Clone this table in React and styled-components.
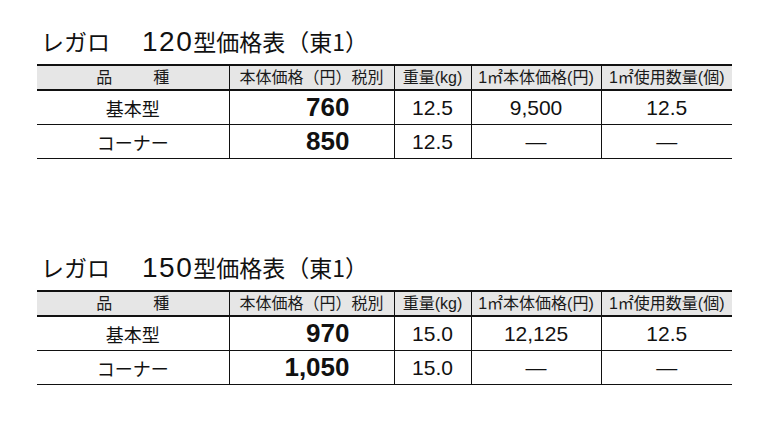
import React from "react"
import styled, { createGlobalStyle } from "styled-components"

const GlobalStyle = createGlobalStyle`
  body {
    margin: 0;
    background: #fff;
    font-family: "Liberation Sans", "Noto Sans CJK JP", sans-serif;
    color: #111;
  }
`

const tables = [
  {
    model: "120",
    rows: [
      { name: "基本型", price: "760", weight: "12.5", perArea: "9,500", count: "12.5" },
      { name: "コーナー", price: "850", weight: "12.5", perArea: "—", count: "—" },
    ],
  },
  {
    model: "150",
    rows: [
      { name: "基本型", price: "970", weight: "15.0", perArea: "12,125", count: "12.5" },
      { name: "コーナー", price: "1,050", weight: "15.0", perArea: "—", count: "—" },
    ],
  },
]

const App = () => {
  return (
    <Page>
      <GlobalStyle />
      {tables.map((t) => (
        <Section key={t.model}>
          <Title>
            <Brand>レガロ　</Brand>
            <Model>{t.model}</Model>型価格表<Area>（東1）</Area>
          </Title>
          <PriceTable>
            <colgroup>
              <col style={{ width: 192 }} />
              <col style={{ width: 165 }} />
              <col style={{ width: 77 }} />
              <col style={{ width: 130 }} />
              <col style={{ width: 131 }} />
            </colgroup>
            <thead>
              <tr>
                <Th>
                  <Spread>
                    <span>品</span>
                    <span>種</span>
                  </Spread>
                </Th>
                <Th>本体価格（円）税別</Th>
                <Th>重量(kg)</Th>
                <Th>1㎡本体価格(円)</Th>
                <Th>1㎡使用数量(個)</Th>
              </tr>
            </thead>
            <tbody>
              {t.rows.map((r) => (
                <tr key={r.name}>
                  <Label>{r.name}</Label>
                  <Price>{r.price}</Price>
                  <Cell>{r.weight}</Cell>
                  <Cell>{r.perArea}</Cell>
                  <Cell>{r.count}</Cell>
                </tr>
              ))}
            </tbody>
          </PriceTable>
        </Section>
      ))}
    </Page>
  )
}

export default App

const Page = styled.div`
  display: flex;
  flex-direction: column;
  gap: 94px;
  padding: 27px 0 0 37px;
`

const Section = styled.section`
  width: 695px;
`

const Title = styled.div`
  font-size: 23px;
  line-height: 28px;
  height: 28px;
  margin-bottom: 9px;
  padding-left: 4px;
  white-space: nowrap;
  color: #111;
`

const Brand = styled.span`
  margin-right: 9px;
`

const Model = styled.span`
  font-size: 28px;
  letter-spacing: 1.5px;
`

const Area = styled.span`
  margin-left: 1px;
  font-family: "Noto Sans CJK JP", sans-serif;
`

const PriceTable = styled.table`
  width: 695px;
  table-layout: fixed;
  border-collapse: collapse;
  border-top: 2px solid #111;
`

const Th = styled.th`
  height: 23px;
  padding: 0;
  background: #e6e6e6;
  border-bottom: 2px solid #111;
  font-size: 16px;
  font-weight: 400;
  line-height: 23px;
  text-align: center;
  white-space: nowrap;
  overflow: hidden;
  color: #1a1a1a;

  & + & {
    border-left: 1px solid #111;
  }
`

const Spread = styled.span`
  display: inline-flex;
  gap: 41px;
`

const Cell = styled.td`
  height: 33px;
  padding: 0;
  border-bottom: 1px solid #111;
  border-left: 1px solid #111;
  font-size: 21px;
  text-align: center;
  white-space: nowrap;
`

const Label = styled(Cell)`
  border-left: none;
  font-size: 18px;
`

const Price = styled(Cell)`
  font-size: 26px;
  font-weight: 700;
  text-align: right;
  padding-right: 44px;
`
